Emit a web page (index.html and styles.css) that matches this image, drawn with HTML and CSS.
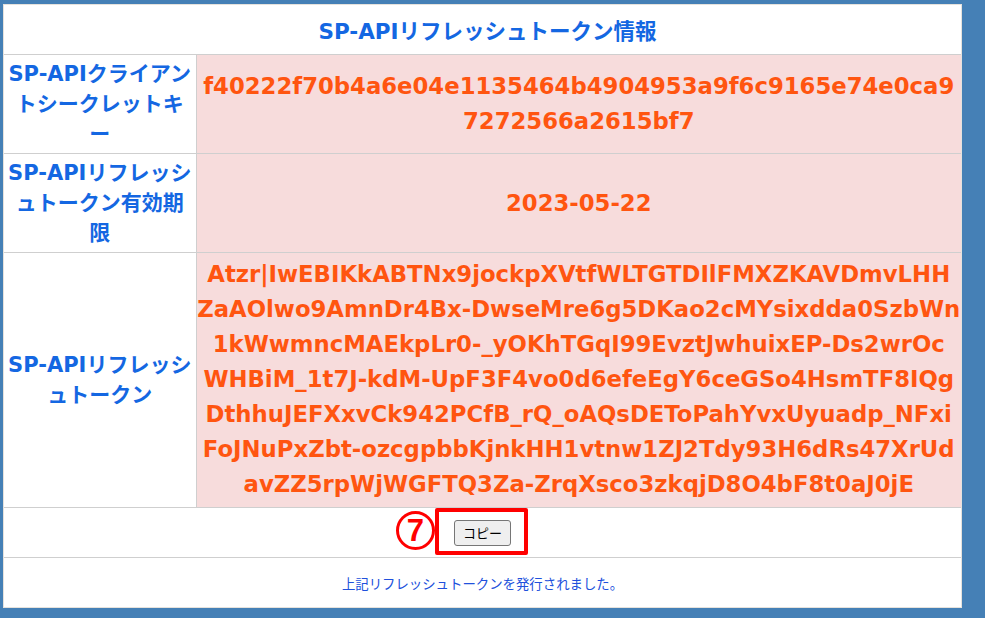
FILE: index.html
```html
<!DOCTYPE html>
<html lang="ja">
<head>
  <meta charset="UTF-8" />
  <title>SP-APIリフレッシュトークン情報</title>
  <link rel="stylesheet" href="styles.css">
</head>
<body>
  <div class="panel">
    <table class="info">
      <colgroup>
        <col class="label-col">
        <col>
      </colgroup>
      <tr>
        <th colspan="2" class="title">SP-APIリフレッシュトークン情報</th>
      </tr>
      <tr>
        <th class="label">SP-APIクライアン<br>トシークレットキ<br>ー</th>
        <td class="value">f40222f70b4a6e04e1135464b4904953a9f6c9165e74e0ca9<br>7272566a2615bf7</td>
      </tr>
      <tr>
        <th class="label">SP-APIリフレッシ<br>ュトークン有効期<br>限</th>
        <td class="value">2023-05-22</td>
      </tr>
      <tr>
        <th class="label">SP-APIリフレッシ<br>ュトークン</th>
        <td class="value token">Atzr|IwEBIKkABTNx9jockpXVtfWLTGTDIlFMXZKAVDmvLHH<br>ZaAOlwo9AmnDr4Bx-DwseMre6g5DKao2cMYsixdda0SzbWn<br>1kWwmncMAEkpLr0-_yOKhTGqI99EvztJwhuixEP-Ds2wrOc<br>WHBiM_1t7J-kdM-UpF3F4vo0d6efeEgY6ceGSo4HsmTF8IQg<br>DthhuJEFXxvCk942PCfB_rQ_oAQsDEToPahYvxUyuadp_NFxi<br>FoJNuPxZbt-ozcgpbbKjnkHH1vtnw1ZJ2Tdy93H6dRs47XrUd<br>avZZ5rpWjWGFTQ3Za-ZrqXsco3zkqjD8O4bF8t0aJ0jE</td>
      </tr>
      <tr>
        <td colspan="2" class="action">
          <span class="marked">
            <span class="step">7</span>
            <button type="button" class="copy">コピー</button>
          </span>
        </td>
      </tr>
      <tr>
        <td colspan="2" class="note">上記リフレッシュトークンを発行されました。</td>
      </tr>
    </table>
  </div>
</body>
</html>
```

FILE: styles.css
```css
body {
  margin: 0;
  background-color: #4580b6;
  font-family: "DejaVu Sans", "Noto Sans CJK JP", sans-serif;
}
.panel {
  margin: 4px 0 0 3px;
  width: 959px;
  background-color: #fff;
  border: 1px solid #e6e2dc;
  box-sizing: border-box;
}
table.info {
  border-collapse: collapse;
  table-layout: fixed;
  width: 100%;
}
col.label-col {
  width: 192px;
}
th, td {
  border: 1px solid #cfcfcf;
  text-align: center;
  vertical-align: middle;
  padding: 4px 2px;
}
table.info tr:first-child th {
  border-top: none;
}
table.info tr th:first-child,
table.info tr td:first-child {
  border-left: none;
}
table.info tr th:last-child,
table.info tr td:last-child {
  border-right: none;
}
table.info tr:last-child td {
  border-bottom: none;
}
th.title {
  height: 41px;
  padding-left: 12px;
  color: #1467e2;
  font-size: 21.5px;
  font-weight: bold;
}
th.label {
  padding: 4px 0;
  color: #1467e2;
  font-size: 21px;
  line-height: 30px;
  font-weight: bold;
  background-color: #fff;
  white-space: nowrap;
}
td.value {
  padding: 4px 0;
  background-color: #f7dcdc;
  color: #ff5510;
  font-size: 22.75px;
  line-height: 35px;
  font-weight: bold;
  white-space: nowrap;
}
td.token {
  padding-bottom: 5px;
}
td.action {
  height: 41px;
}
td.note {
  height: 41px;
  color: #2050dc;
  font-size: 13.4px;
  font-family: "Noto Sans CJK JP", sans-serif;
}
/* 注釈の赤枠と番号 */
.marked {
  position: relative;
  display: inline-block;
}
.marked::before {
  content: "";
  position: absolute;
  left: -19px;
  right: -17px;
  top: -12px;
  bottom: -9px;
  border: 4px solid #ff0000;
  border-radius: 2px;
}
.step {
  position: absolute;
  left: -58px;
  top: -9px;
  width: 33px;
  height: 33px;
  border: 3px solid #ff0000;
  border-radius: 50%;
  color: #ff0000;
  font-family: "Liberation Sans", sans-serif;
  font-weight: bold;
  font-size: 31px;
  line-height: 33px;
  text-align: center;
}
button.copy {
  font-family: "Noto Sans CJK JP", sans-serif;
  font-size: 13px;
  padding: 2px 8px;
  height: 26px;
  background-color: #efefef;
  border: 1px solid #767676;
  border-radius: 3px;
  color: #000;
  vertical-align: middle;
}
```
